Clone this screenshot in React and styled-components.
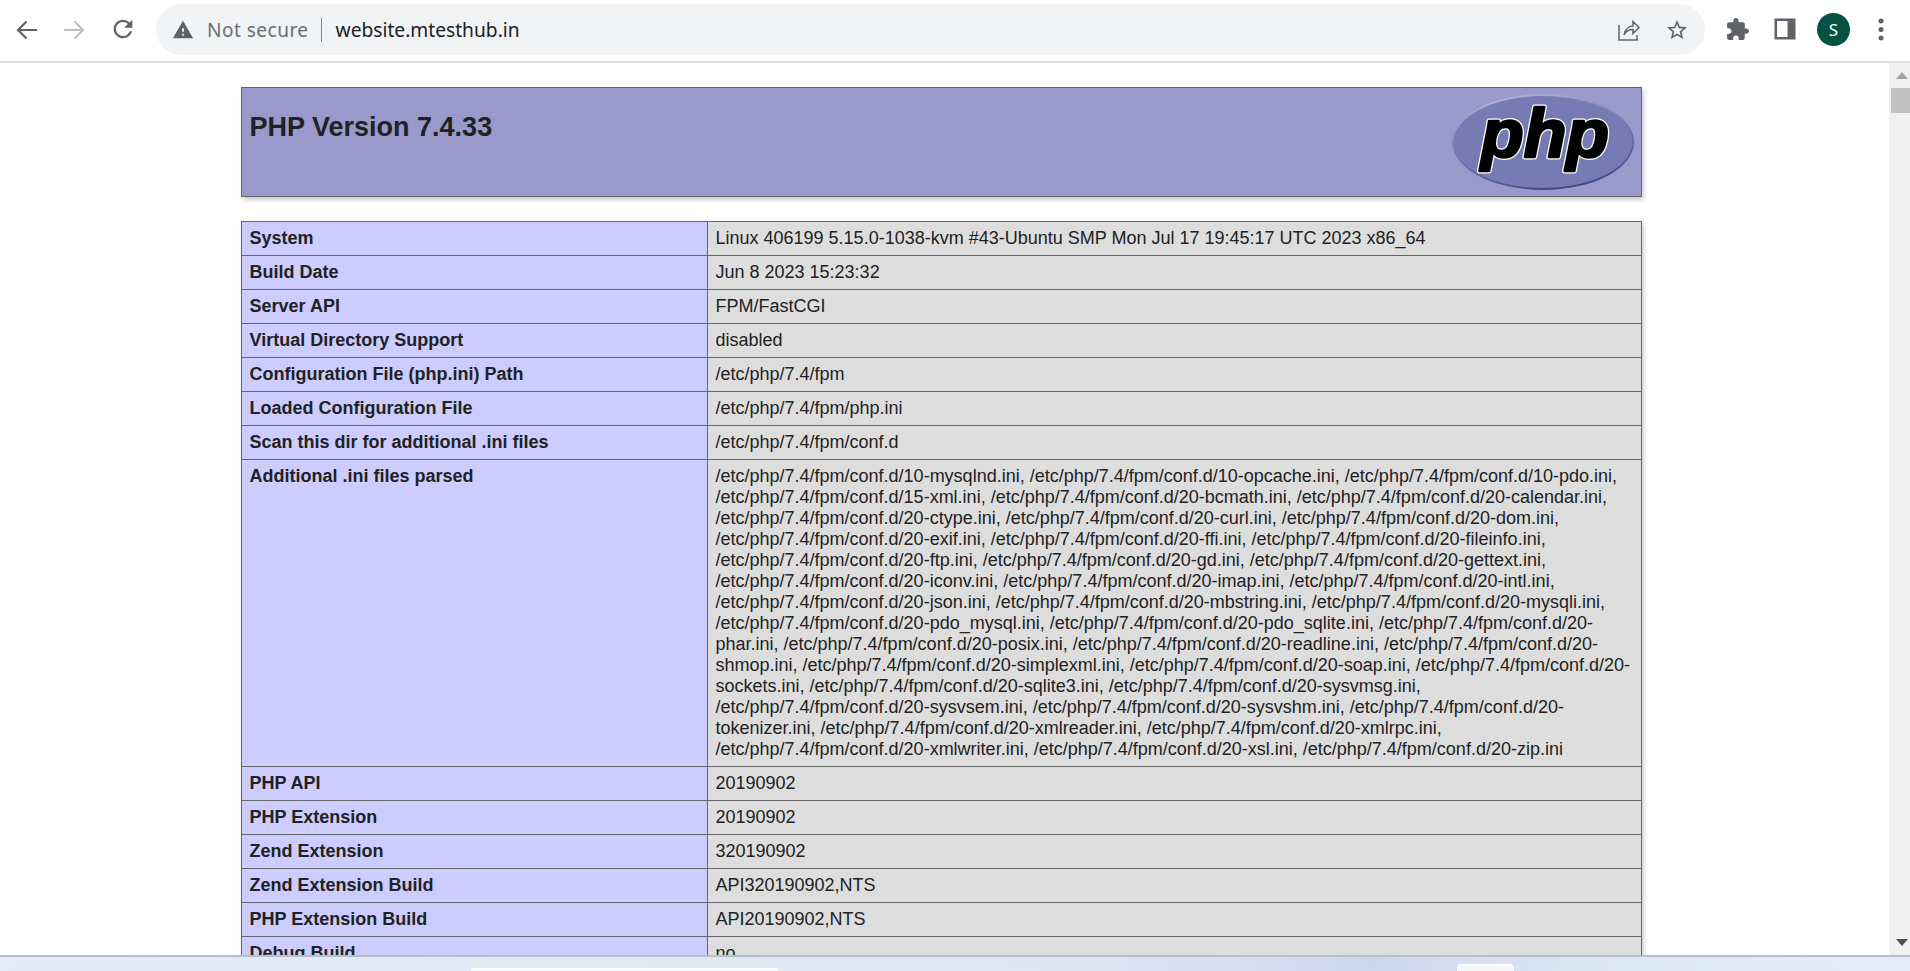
import React from 'react';
import styled, { createGlobalStyle } from 'styled-components';

const Global = createGlobalStyle`
  html, body { margin: 0; padding: 0; height: 100%; overflow: hidden; background: #fff; }
  #root { height: 100%; }
`;

const Window = styled.div`
  width: 1910px;
  height: 971px;
  display: flex;
  flex-direction: column;
  overflow: hidden;
  font-family: "Liberation Sans", Arial, sans-serif;
`;

const Toolbar = styled.header`
  flex: 0 0 63px;
  box-sizing: border-box;
  height: 63px;
  display: flex;
  align-items: flex-start;
  padding: 4px 0 0 12px;
  background: #fff;
  border-bottom: 2px solid #dedfe1;
`;

const NavButton = styled.div`
  width: 28px;
  height: 28px;
  margin: 11px ${p => p.$gap ?? 20}px 0 0;
  display: flex;
  align-items: center;
  justify-content: center;
  color: ${p => (p.$disabled ? '#bdc1c6' : '#5f6368')};
  flex: none;
`;

const Omnibox = styled.div`
  width: 1549px;
  height: 51px;
  margin-left: -8px;
  border-radius: 26px;
  background: #f1f3f4;
  display: flex;
  align-items: center;
  padding: 0 0 0 16px;
  box-sizing: border-box;
  flex: none;
  color: #5f6368;
`;

const SecurityText = styled.span`
  font-family: "Noto Sans", "Open Sans", sans-serif;
  font-size: 19.1px;
  letter-spacing: 0.45px;
  color: #6a6e73;
  margin-left: 13px;
`;

const Divider = styled.span`
  width: 1px;
  height: 24px;
  background: #80868b;
  margin: 0 14px 0 12px;
`;

const Url = styled.span`
  font-family: "Noto Sans", "Open Sans", sans-serif;
  font-size: 19.2px;
  color: #202124;
  flex: 1;
`;

const OmniAction = styled.div`
  width: 24px;
  height: 24px;
  margin-right: ${p => p.$gap}px;
  display: flex;
  align-items: center;
  justify-content: center;
  color: #5f6368;
`;

const ToolIcon = styled.div`
  width: 28px;
  height: 28px;
  margin: 11px ${p => p.$gap}px 0 0;
  margin-left: ${p => p.$left ?? 0}px;
  display: flex;
  align-items: center;
  justify-content: center;
  color: #5f6368;
  flex: none;
`;

const Avatar = styled.div`
  width: 33px;
  height: 33px;
  margin: 9px 0 0 18px;
  flex: none;
  border-radius: 50%;
  background: #04523f;
  color: #fff;
  font-family: "Noto Sans", sans-serif;
  font-size: 17px;
  display: flex;
  align-items: center;
  justify-content: center;
`;

const Viewport = styled.div`
  flex: 1;
  min-height: 0;
  display: flex;
`;

const PageArea = styled.main`
  flex: 1;
  min-width: 0;
  overflow: hidden;
  padding: 24px 0 0 241px;
  box-sizing: border-box;
  background: #fff;
  color: #222;
`;

const Banner = styled.section`
  width: 1401px;
  height: 110px;
  box-sizing: border-box;
  border: 1px solid #666;
  background: #99c;
  box-shadow: 1.5px 3px 4.5px #ccc;
  display: flex;
  justify-content: space-between;
  align-items: flex-start;
  padding: 0 1px 0 7.5px;
  margin-bottom: 24px;
`;

const Title = styled.h1`
  margin: 24px 0 0;
  font-size: 27px;
  line-height: 31px;
  font-weight: bold;
  color: #222;
`;

const Logo = styled.svg`
  display: block;
  margin-top: 4px;
  flex: none;
`;

const InfoTable = styled.table`
  width: 1401px;
  table-layout: fixed;
  border-collapse: collapse;
  box-shadow: 1.5px 3px 4.5px #ccc;
  font-size: 18px;
  line-height: 21px;
  color: #222;
`;

const Cell = styled.td`
  border: 1px solid #666;
  padding: 6px 7.5px;
  vertical-align: baseline;
  word-break: break-word;
`;

const KeyCell = styled(Cell)`
  width: 466px;
  box-sizing: border-box;
  background: #ccf;
  font-weight: bold;
`;

const ValueCell = styled(Cell)`
  background: #ddd;
`;

const Scrollbar = styled.aside`
  flex: 0 0 21px;
  background: #f1f1f1;
  display: flex;
  flex-direction: column;
  align-items: flex-end;
  padding-top: 9px;
  box-sizing: border-box;
`;

const ScrollUp = styled.div`
  width: 0;
  height: 0;
  border-left: 6px solid transparent;
  border-right: 6px solid transparent;
  border-bottom: 7px solid #a3a3a3;
  margin-right: 2px;
`;

const ScrollThumb = styled.div`
  width: 19px;
  height: 25px;
  margin-top: 9px;
  background: #c1c1c1;
`;

const ScrollDown = styled.div`
  width: 0;
  height: 0;
  margin-top: auto;
  margin-bottom: 9px;
  margin-right: 2px;
  border-left: 6px solid transparent;
  border-right: 6px solid transparent;
  border-top: 7px solid #505050;
`;

const Taskbar = styled.footer`
  flex: 0 0 16px;
  height: 16px;
  box-sizing: border-box;
  border-top: 2px solid #b8bdc8;
  background: linear-gradient(90deg, #e2ecf6 0%, #dfeaf5 35%, #dde8f4 55%, #ced8ec 72%, #dde9f4 85%, #e2edf7 100%);
  display: flex;
  align-items: flex-end;
`;

const TaskTab = styled.div`
  width: ${p => p.$w}px;
  height: ${p => p.$h}px;
  margin-left: ${p => p.$left}px;
  background: #f4f7fb;
  border: 1px solid #fff;
  border-bottom: 0;
  box-sizing: border-box;
  border-radius: 4px 4px 0 0;
`;

const I = ({ d, size = 28, vb = 24 }) => (
  <svg width={size} height={size} viewBox={`0 0 ${vb} ${vb}`} fill="currentColor"><path d={d} /></svg>
);

const rows = [
  ['System', 'Linux 406199 5.15.0-1038-kvm #43-Ubuntu SMP Mon Jul 17 19:45:17 UTC 2023 x86_64'],
  ['Build Date', 'Jun 8 2023 15:23:32'],
  ['Server API', 'FPM/FastCGI'],
  ['Virtual Directory Support', 'disabled'],
  ['Configuration File (php.ini) Path', '/etc/php/7.4/fpm'],
  ['Loaded Configuration File', '/etc/php/7.4/fpm/php.ini'],
  ['Scan this dir for additional .ini files', '/etc/php/7.4/fpm/conf.d'],
  ['Additional .ini files parsed', '/etc/php/7.4/fpm/conf.d/10-mysqlnd.ini, /etc/php/7.4/fpm/conf.d/10-opcache.ini, /etc/php/7.4/fpm/conf.d/10-pdo.ini, /etc/php/7.4/fpm/conf.d/15-xml.ini, /etc/php/7.4/fpm/conf.d/20-bcmath.ini, /etc/php/7.4/fpm/conf.d/20-calendar.ini, /etc/php/7.4/fpm/conf.d/20-ctype.ini, /etc/php/7.4/fpm/conf.d/20-curl.ini, /etc/php/7.4/fpm/conf.d/20-dom.ini, /etc/php/7.4/fpm/conf.d/20-exif.ini, /etc/php/7.4/fpm/conf.d/20-ffi.ini, /etc/php/7.4/fpm/conf.d/20-fileinfo.ini, /etc/php/7.4/fpm/conf.d/20-ftp.ini, /etc/php/7.4/fpm/conf.d/20-gd.ini, /etc/php/7.4/fpm/conf.d/20-gettext.ini, /etc/php/7.4/fpm/conf.d/20-iconv.ini, /etc/php/7.4/fpm/conf.d/20-imap.ini, /etc/php/7.4/fpm/conf.d/20-intl.ini, /etc/php/7.4/fpm/conf.d/20-json.ini, /etc/php/7.4/fpm/conf.d/20-mbstring.ini, /etc/php/7.4/fpm/conf.d/20-mysqli.ini, /etc/php/7.4/fpm/conf.d/20-pdo_mysql.ini, /etc/php/7.4/fpm/conf.d/20-pdo_sqlite.ini, /etc/php/7.4/fpm/conf.d/20-phar.ini, /etc/php/7.4/fpm/conf.d/20-posix.ini, /etc/php/7.4/fpm/conf.d/20-readline.ini, /etc/php/7.4/fpm/conf.d/20-shmop.ini, /etc/php/7.4/fpm/conf.d/20-simplexml.ini, /etc/php/7.4/fpm/conf.d/20-soap.ini, /etc/php/7.4/fpm/conf.d/20-sockets.ini, /etc/php/7.4/fpm/conf.d/20-sqlite3.ini, /etc/php/7.4/fpm/conf.d/20-sysvmsg.ini, /etc/php/7.4/fpm/conf.d/20-sysvsem.ini, /etc/php/7.4/fpm/conf.d/20-sysvshm.ini, /etc/php/7.4/fpm/conf.d/20-tokenizer.ini, /etc/php/7.4/fpm/conf.d/20-xmlreader.ini, /etc/php/7.4/fpm/conf.d/20-xmlrpc.ini, /etc/php/7.4/fpm/conf.d/20-xmlwriter.ini, /etc/php/7.4/fpm/conf.d/20-xsl.ini, /etc/php/7.4/fpm/conf.d/20-zip.ini'],
  ['PHP API', '20190902'],
  ['PHP Extension', '20190902'],
  ['Zend Extension', '320190902'],
  ['Zend Extension Build', 'API320190902,NTS'],
  ['PHP Extension Build', 'API20190902,NTS'],
  ['Debug Build', 'no'],
];

const PhpLogo = () => (
  <Logo width="195" height="100" viewBox="0 0 195 100" role="img" aria-label="PHP logo">
    <defs>
      <linearGradient id="rim" x1="0.25" y1="0" x2="0.65" y2="1">
        <stop offset="0" stopColor="#b4b7d8" />
        <stop offset="0.45" stopColor="#777bb4" />
        <stop offset="1" stopColor="#3f4488" />
      </linearGradient>
    </defs>
    <ellipse cx="98" cy="50" rx="91" ry="48" fill="url(#rim)" />
    <ellipse cx="98" cy="50" rx="89.5" ry="46" fill="#777bb4" />
    <g fontFamily="'Liberation Sans', Arial, sans-serif" fontWeight="bold" fontStyle="italic" fontSize="68" textAnchor="middle">
      <text x="100" y="65" stroke="#fff" strokeWidth="5" strokeLinejoin="round" fill="#fff" textLength="128" lengthAdjust="spacingAndGlyphs">php</text>
      <text x="100" y="65" stroke="#000" strokeWidth="2.6" strokeLinejoin="round" fill="#000" textLength="128" lengthAdjust="spacingAndGlyphs">php</text>
    </g>
  </Logo>
);

export default function App() {
  return (
    <>
      <Global />
      <Window>
        <Toolbar>
          <NavButton>
            <svg width="28" height="28" viewBox="0 0 28 28" fill="none" stroke="currentColor" strokeWidth="2.2">
              <path d="M25 15H6M14.5 6.5L6 15l8.5 8.5" />
            </svg>
          </NavButton>
          <NavButton $disabled $gap={21}>
            <svg width="28" height="28" viewBox="0 0 28 28" fill="none" stroke="currentColor" strokeWidth="2.2">
              <path d="M4 15h19M14.5 6.5L23 15l-8.5 8.5" />
            </svg>
          </NavButton>
          <NavButton $gap={27}><I size={30} d="M17.65 6.35A7.958 7.958 0 0 0 12 4c-4.42 0-7.99 3.58-7.99 8s3.57 8 7.99 8c3.73 0 6.84-2.55 7.73-6h-2.08A5.99 5.99 0 0 1 12 18c-3.31 0-6-2.69-6-6s2.69-6 6-6c1.66 0 3.14.69 4.22 1.78L13 11h7V4l-2.35 2.35z" /></NavButton>
          <Omnibox>
            <I size={22} d="M1 21h22L12 2 1 21zm12-3h-2v-2h2v2zm0-4h-2v-4h2v4z" />
            <SecurityText>Not secure</SecurityText>
            <Divider />
            <Url>website.mtesthub.in</Url>
            <OmniAction $gap={24}>
              <svg width="24" height="24" viewBox="0 0 24 24" fill="none" stroke="currentColor" strokeWidth="1.5">
                <path d="M2 7v15h18v-5M7 17c1-6 5-9 9-9V3.5l6 6-6 6v-4c-4 0-7 1-9 5.5z" />
              </svg>
            </OmniAction>
            <OmniAction $gap={16}><I size={28} d="M22 9.24l-7.19-.62L12 2 9.19 8.63 2 9.24l5.46 4.73L5.82 21 12 17.27 18.18 21l-1.63-7.03L22 9.24zM12 15.4l-3.76 2.27 1-4.28-3.32-2.88 4.38-.38L12 6.1l1.71 4.04 4.38.38-3.32 2.88 1 4.28L12 15.4z" /></OmniAction>
          </Omnibox>
          <ToolIcon $left={18} $gap={20}><I size={25} d="M20.5 11H19V7c0-1.1-.9-2-2-2h-4V3.5C13 2.12 11.88 1 10.5 1S8 2.12 8 3.5V5H4c-1.1 0-1.99.9-1.99 2v3.8H3.5c1.49 0 2.7 1.21 2.7 2.7s-1.21 2.7-2.7 2.7H2V20c0 1.1.9 2 2 2h3.8v-1.5c0-1.49 1.21-2.7 2.7-2.7 1.49 0 2.7 1.21 2.7 2.7V22H17c1.1 0 2-.9 2-2v-4h1.5c1.38 0 2.5-1.12 2.5-2.5S21.88 11 20.5 11z" /></ToolIcon>
          <ToolIcon $gap={0}>
            <svg width="28" height="28" viewBox="0 0 28 28" fill="currentColor">
              <path d="M3.5 3.5h21v21h-21zM6 6v16h10.5V6z" fillRule="evenodd" />
            </svg>
          </ToolIcon>
          <Avatar>S</Avatar>
          <ToolIcon $left={17} $gap={0}>
            <svg width="28" height="28" viewBox="0 0 28 28" fill="currentColor">
              <circle cx="14" cy="6" r="2.5" /><circle cx="14" cy="14.5" r="2.5" /><circle cx="14" cy="23" r="2.5" />
            </svg>
          </ToolIcon>
        </Toolbar>
        <Viewport>
          <PageArea>
            <Banner>
              <Title>PHP Version 7.4.33</Title>
              <PhpLogo />
            </Banner>
            <InfoTable>
              <tbody>
                {rows.map(([k, v]) => (
                  <tr key={k}>
                    <KeyCell>{k}</KeyCell>
                    <ValueCell>{v}</ValueCell>
                  </tr>
                ))}
              </tbody>
            </InfoTable>
          </PageArea>
          <Scrollbar>
            <ScrollUp />
            <ScrollThumb />
            <ScrollDown />
          </Scrollbar>
        </Viewport>
        <Taskbar>
          <TaskTab $left={471} $w={307} $h={3} />
          <TaskTab $left={679} $w={57} $h={7} />
        </Taskbar>
      </Window>
    </>
  );
}
